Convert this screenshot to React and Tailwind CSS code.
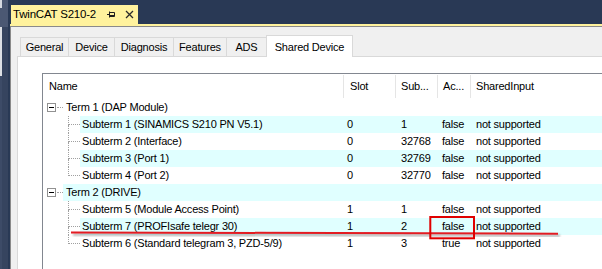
import React from "react";

const rows = [
  { kind: "term", label: "Term 1 (DAP Module)" },
  { kind: "sub", label: "Subterm 1 (SINAMICS S210 PN V5.1)", slot: "0", sub: "1", ac: "false", shared: "not supported" },
  { kind: "sub", label: "Subterm 2 (Interface)", slot: "0", sub: "32768", ac: "false", shared: "not supported" },
  { kind: "sub", label: "Subterm 3 (Port 1)", slot: "0", sub: "32769", ac: "false", shared: "not supported" },
  { kind: "sub", label: "Subterm 4 (Port 2)", slot: "0", sub: "32770", ac: "false", shared: "not supported", last: true },
  { kind: "term", label: "Term 2 (DRIVE)" },
  { kind: "sub", label: "Subterm 5 (Module Access Point)", slot: "1", sub: "1", ac: "false", shared: "not supported" },
  { kind: "sub", label: "Subterm 7 (PROFIsafe telegr 30)", slot: "1", sub: "2", ac: "false", shared: "not supported" },
  { kind: "sub", label: "Subterm 6 (Standard telegram 3, PZD-5/9)", slot: "1", sub: "3", ac: "true", shared: "not supported", last: true },
];

const tabs = [
  { label: "General", w: "w-[49px]" },
  { label: "Device", w: "w-[47px]" },
  { label: "Diagnosis", w: "w-[60px]" },
  { label: "Features", w: "w-[54px]" },
  { label: "ADS", w: "w-[41px]" },
];

function TreeGutter({ row }) {
  if (row.kind === "term") {
    return (
      <div className="flex w-[20px] shrink-0 items-center pl-[4px]">
        <div className="flex h-[9px] w-[9px] shrink-0 items-center justify-center border border-[#919191] bg-white">
          <div className="h-px w-[5px] bg-black" />
        </div>
        <div className="ml-px h-0 w-[6px] border-t border-dotted border-[#a0a0a0]" />
      </div>
    );
  }
  return (
    <div className="flex w-[37px] shrink-0 items-stretch pl-[25px]">
      <div className="flex w-px flex-col">
        <div className="h-1/2 border-l border-dotted border-[#a0a0a0]" />
        <div className={`h-1/2 ${row.last ? "" : "border-l border-dotted border-[#a0a0a0]"}`} />
      </div>
      <div className="h-0 w-[11px] self-center border-t border-dotted border-[#a0a0a0]" />
    </div>
  );
}

function Row({ row, i }) {
  const bg = i % 2 === 1 ? "bg-[#e0ffff]" : "bg-white";
  return (
    <div className="flex h-[17px] items-stretch">
      <div className="flex w-[300px] shrink-0">
        <TreeGutter row={row} />
        <div className={`flex flex-1 items-center ${bg} ${row.kind === "term" ? "pl-[3px]" : "pl-[2px]"}`}>{row.label}</div>
      </div>
      <div className={`flex w-[52px] shrink-0 items-center pl-[4px] ${bg}`}>{row.slot}</div>
      <div className={`flex w-[42px] shrink-0 items-center pl-[6px] ${bg}`}>{row.sub}</div>
      <div className={`flex w-[33px] shrink-0 items-center pl-[5px] ${bg}`}>{row.ac}</div>
      <div className={`flex flex-1 items-center pl-[6px] ${bg}`}>{row.shared}</div>
    </div>
  );
}

export default function App() {
  return (
    <div className="relative flex h-[269px] w-[602px] overflow-hidden bg-[#293955] font-['Liberation_Sans',Arial,sans-serif] text-[11px] tracking-[-0.2px] text-black">
      {/* left docking strip */}
      <div className="flex w-[10px] shrink-0">
        <div className="flex w-[2px] flex-col">
          <div className="h-[8px] bg-[#d5d9e0]" />
          <div className="h-[19px] bg-[#4b5873]" />
          <div className="h-[49px] bg-[#dcdfe4]" />
          <div className="flex-1 bg-[#3d4b67]" />
        </div>
        <div className="flex w-[6px] flex-col">
          <div className="h-[27px] bg-[#4b5873]" />
          <div className="flex-1 bg-[#36445f]" />
        </div>
        <div className="w-[2px] bg-[#293955]" />
      </div>

      <div className="flex flex-1 flex-col">
        {/* document tab */}
        <div className="flex h-[24px] items-end pl-px">
          <div className="flex h-[19px] w-[127px] items-center bg-[#fff29d] pl-[2px] text-[11.5px]">
            <span>TwinCAT S210-2</span>
            <svg className="ml-[11px]" width="10" height="8" viewBox="0 0 10 8" fill="none" stroke="#1e1e1e" strokeWidth="1">
              <path d="M0 3.5h2.5M2.5 0.5v6M3 1.5h4.5v4H3M3 4.5h4.5" />
            </svg>
            <svg className="ml-[8px]" width="9" height="9" viewBox="0 0 9 9" fill="none" stroke="#2a2a2a" strokeWidth="1.3">
              <path d="M1 1l7 7M8 1l-7 7" />
            </svg>
          </div>
        </div>
        <div className="h-[2px] bg-[#fff29d]" />

        <div className="flex flex-1 flex-col border-l border-t border-[#8a8a8a] bg-[#f0f0f0] pl-[6px] pt-[8px]">
          {/* tab strip */}
          <div className="flex h-[21px] items-end pl-[3px]">
            {tabs.map((t, i) => (
              <div key={t.label} className={`flex h-[19px] ${t.w} ${i > 0 ? "-ml-px" : ""} items-center justify-center border border-b-0 border-[#d9d9d9] bg-[#f0f0f0]`}>
                {t.label}
              </div>
            ))}
            <div className="relative z-10 -mb-px -ml-px flex h-[22px] w-[87px] items-start justify-center border border-b-0 border-[#d9d9d9] bg-white pt-[3px]">
              Shared Device
            </div>
          </div>

          {/* tab page */}
          <div className="flex flex-1 flex-col border-l border-t border-[#d9d9d9] bg-white pl-[24px] pt-[16px]">
            <div className="flex flex-1 flex-col border-l border-t border-[#828790] bg-white">
              <div className="flex h-[25px] items-stretch">
                <div className="flex w-[300px] shrink-0 items-center pl-[6px]">Name</div>
                <div className="flex w-[52px] shrink-0 items-stretch">
                  <div className="my-px w-px bg-[#e5e5e5]" />
                  <div className="flex items-center pl-[6px]">Slot</div>
                </div>
                <div className="flex w-[42px] shrink-0 items-stretch">
                  <div className="my-px w-px bg-[#e5e5e5]" />
                  <div className="flex items-center pl-[5px]">Sub...</div>
                </div>
                <div className="flex w-[33px] shrink-0 items-stretch">
                  <div className="my-px w-px bg-[#e5e5e5]" />
                  <div className="flex items-center pl-[5px]">Ac...</div>
                </div>
                <div className="flex flex-1 items-stretch">
                  <div className="my-px w-px bg-[#e5e5e5]" />
                  <div className="flex items-center pl-[5px]">SharedInput</div>
                </div>
              </div>
              {rows.map((r, i) => (
                <Row key={r.label} row={r} i={i} />
              ))}
            </div>
          </div>
        </div>
      </div>

      {/* red annotation */}
      <svg className="pointer-events-none absolute left-0 top-0" width="602" height="269" viewBox="0 0 602 269">
        <defs>
          <filter id="sh" x="-5%" y="-200%" width="110%" height="500%">
            <feDropShadow dx="2" dy="2" stdDeviation="1.2" floodColor="#000" floodOpacity="0.35" />
          </filter>
        </defs>
        <line x1="71" y1="232.4" x2="558" y2="233.7" stroke="#e31b23" strokeWidth="2" filter="url(#sh)" />
        <rect x="430.3" y="217" width="43.7" height="21.3" fill="none" stroke="#e00000" strokeWidth="2" />
      </svg>
    </div>
  );
}
